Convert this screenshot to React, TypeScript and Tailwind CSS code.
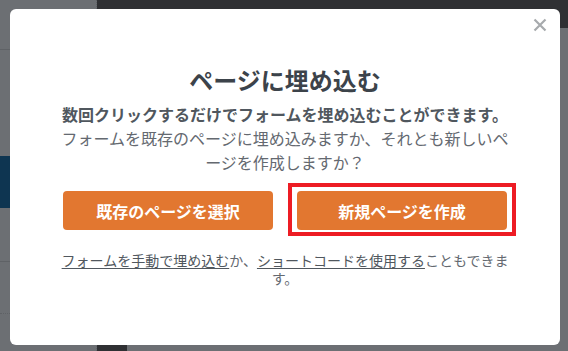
import React from 'react';

const EmbedModal = () => {
  return (
    <div className="absolute left-[10px] top-[9px] w-[550px] h-[336px] bg-white rounded-[6px] font-['Noto_Sans_CJK_JP','Noto_Sans',sans-serif]">
      {/* Close button */}
      <button
        type="button"
        className="absolute right-[13px] top-[9px] w-[14px] h-[14px] text-[#a7aaad]"
        aria-label="Close"
      >
        <svg viewBox="0 0 14 14" className="w-[14px] h-[14px]" fill="none" stroke="currentColor" strokeWidth={2.2}>
          <path d="M1.5 1.5l11 11M12.5 1.5l-11 11" />
        </svg>
      </button>

      <div className="w-[452px] mx-auto pt-[55px] flex flex-col items-center text-center">
        <h2 className="text-[24px] leading-[31px] font-bold text-[#3c434a]">ページに埋め込む</h2>
        <p className="mt-[7px] text-[16px] leading-[24px] font-bold text-[#50575e]">
          数回クリックするだけでフォームを埋め込むことができます。
        </p>
        <p className="text-[16px] leading-[24px] text-[#646970]">
          フォームを既存のページに埋め込みますか、それとも新しいページを作成しますか？
        </p>

        <div className="mt-[17px] flex justify-center gap-6">
          <button
            type="button"
            className="w-[210px] h-[39px] rounded-[4px] bg-[#e27730] text-white text-[16px] font-bold"
          >
            既存のページを選択
          </button>
          <div className="relative">
            <button
              type="button"
              className="w-[210px] h-[39px] rounded-[4px] bg-[#e27730] text-white text-[16px] font-bold"
            >
              新規ページを作成
            </button>
            {/* highlight frame */}
            <span className="absolute -inset-x-[9px] -top-[8px] -bottom-[6px] border-[4px] border-[#ed1c24] pointer-events-none" />
          </div>
        </div>

        <p className="mt-[21px] text-[14px] leading-[18px] text-[#646970]">
          <span className="underline underline-offset-2 text-[#50575e]">フォームを手動で埋め込む</span>か、
          <span className="underline underline-offset-2 text-[#50575e]">ショートコードを使用する</span>こともできます。
        </p>
      </div>
    </div>
  );
};

const App = () => {
  return (
    <div className="relative w-[568px] h-[351px] overflow-hidden bg-[#6c6f73]">
      {/* Dimmed admin page behind the modal */}
      <div className="flex h-full">
        <div className="w-[97px] h-full flex flex-col border-r border-dotted border-[#5f6266]">
          <div className="h-[50px] border-b border-[#5f6266]" />
          <div className="h-[106px]" />
          <div className="h-[52px] bg-[#0e3551]" />
          <div className="h-[54px] border-b border-[#5f6266]" />
          <div className="h-[52px] border-b border-dotted border-[#5f6266]" />
        </div>
        <div className="flex-1 flex flex-col">
          <div className="h-[28px] bg-[#2f3033]" />
          <div className="flex-1" />
          <div className="h-[6px] flex">
            <div className="w-[30px] bg-[#2f3033]" />
          </div>
        </div>
      </div>

      <EmbedModal />
    </div>
  );
};

export default App;
